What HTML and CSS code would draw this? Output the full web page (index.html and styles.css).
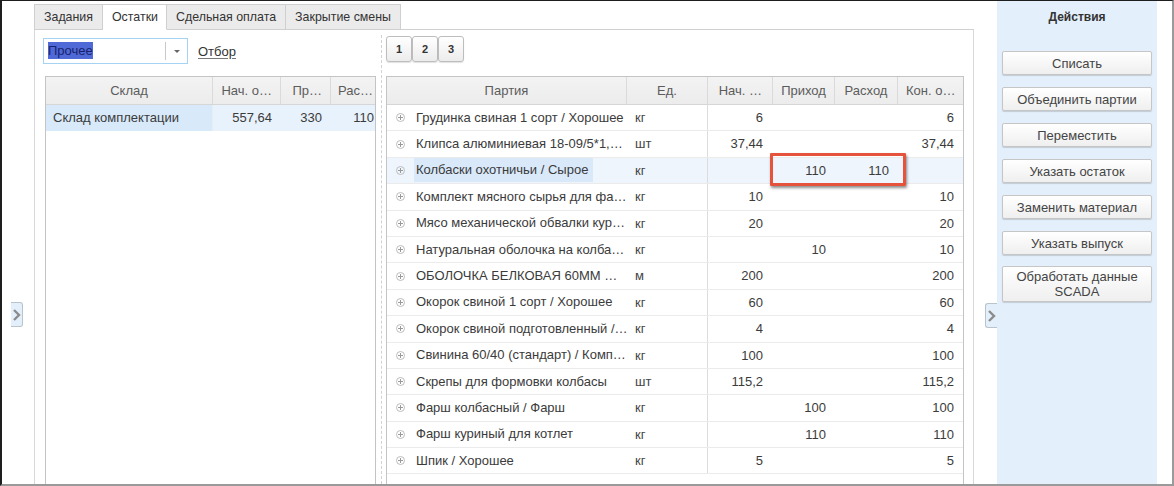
FILE: index.html
```html
<!DOCTYPE html>
<html lang="ru">
<head>
<meta charset="utf-8">
<title>Остатки</title>
<link rel="stylesheet" href="styles.css">
</head>
<body>
<div class="frame">
  <div class="gutter-left">
    <div class="side-arrow arrow-left">
      <svg width="9" height="14" viewBox="0 0 9 14"><polyline points="2,2 7,7 2,12" fill="none" stroke="#8c8c8c" stroke-width="2.4"/></svg>
    </div>
  </div>

  <div class="main">
    <div class="tabs">
      <div class="tab">Задания</div>
      <div class="tab active">Остатки</div>
      <div class="tab">Сдельная оплата</div>
      <div class="tab">Закрытие смены</div>
    </div>
    <div class="panel">
      <div class="col-left">
        <div class="filter-row">
          <div class="combo">
            <span class="combo-value"><span class="sel">Прочее</span></span>
            <span class="combo-btn"><span class="tri"></span></span>
          </div>
          <a class="link">Отбор</a>
        </div>
        <div class="grid grid-left">
          <div class="ghead">
            <div class="hc c-sklad">Склад</div>
            <div class="hc c-nach">Нач. о…</div>
            <div class="hc c-pr">Пр…</div>
            <div class="hc c-ras last">Рас…</div>
          </div>
          <div class="grow selected">
            <div class="bc c-sklad sel-cell">Склад комплектации</div>
            <div class="bc c-nach num">557,64</div>
            <div class="bc c-pr num">330</div>
            <div class="bc c-ras num tight">110</div>
          </div>
        </div>
      </div>

      <div class="sep"></div>

      <div class="col-right">
        <div class="pager">
          <button class="pbtn">1</button>
          <button class="pbtn">2</button>
          <button class="pbtn">3</button>
        </div>
        <div class="grid grid-right">
          <div class="ghead">
            <div class="hc r-party">Партия</div>
            <div class="hc r-ed">Ед.</div>
            <div class="hc r-n">Нач. …</div>
            <div class="hc r-p">Приход</div>
            <div class="hc r-r">Расход</div>
            <div class="hc r-k last">Кон. о…</div>
          </div>
          <div class="gbody">
            <div class="grow"><div class="bc r-party"><span class="exp"></span><span class="pt">Грудинка свиная 1 сорт / Хорошее</span></div><div class="bc r-ed">кг</div><div class="bc r-n num">6</div><div class="bc r-p num"></div><div class="bc r-r num"></div><div class="bc r-k num">6</div></div>
            <div class="grow"><div class="bc r-party"><span class="exp"></span><span class="pt">Клипса алюминиевая 18-09/5*1,…</span></div><div class="bc r-ed">шт</div><div class="bc r-n num">37,44</div><div class="bc r-p num"></div><div class="bc r-r num"></div><div class="bc r-k num">37,44</div></div>
            <div class="grow hl"><div class="bc r-party"><span class="exp"></span><span class="pt pt-sel">Колбаски охотничьи / Сырое</span></div><div class="bc r-ed">кг</div><div class="bc r-n num"></div><div class="bc r-p num">110</div><div class="bc r-r num">110</div><div class="bc r-k num"></div></div>
            <div class="grow"><div class="bc r-party"><span class="exp"></span><span class="pt">Комплект мясного сырья для фа…</span></div><div class="bc r-ed">кг</div><div class="bc r-n num">10</div><div class="bc r-p num"></div><div class="bc r-r num"></div><div class="bc r-k num">10</div></div>
            <div class="grow"><div class="bc r-party"><span class="exp"></span><span class="pt">Мясо механической обвалки кур…</span></div><div class="bc r-ed">кг</div><div class="bc r-n num">20</div><div class="bc r-p num"></div><div class="bc r-r num"></div><div class="bc r-k num">20</div></div>
            <div class="grow"><div class="bc r-party"><span class="exp"></span><span class="pt">Натуральная оболочка на колба…</span></div><div class="bc r-ed">кг</div><div class="bc r-n num"></div><div class="bc r-p num">10</div><div class="bc r-r num"></div><div class="bc r-k num">10</div></div>
            <div class="grow"><div class="bc r-party"><span class="exp"></span><span class="pt">ОБОЛОЧКА БЕЛКОВАЯ 60ММ …</span></div><div class="bc r-ed">м</div><div class="bc r-n num">200</div><div class="bc r-p num"></div><div class="bc r-r num"></div><div class="bc r-k num">200</div></div>
            <div class="grow"><div class="bc r-party"><span class="exp"></span><span class="pt">Окорок свиной 1 сорт / Хорошее</span></div><div class="bc r-ed">кг</div><div class="bc r-n num">60</div><div class="bc r-p num"></div><div class="bc r-r num"></div><div class="bc r-k num">60</div></div>
            <div class="grow"><div class="bc r-party"><span class="exp"></span><span class="pt">Окорок свиной подготовленный /…</span></div><div class="bc r-ed">кг</div><div class="bc r-n num">4</div><div class="bc r-p num"></div><div class="bc r-r num"></div><div class="bc r-k num">4</div></div>
            <div class="grow"><div class="bc r-party"><span class="exp"></span><span class="pt">Свинина 60/40 (стандарт) / Комп…</span></div><div class="bc r-ed">кг</div><div class="bc r-n num">100</div><div class="bc r-p num"></div><div class="bc r-r num"></div><div class="bc r-k num">100</div></div>
            <div class="grow"><div class="bc r-party"><span class="exp"></span><span class="pt">Скрепы для формовки колбасы</span></div><div class="bc r-ed">шт</div><div class="bc r-n num">115,2</div><div class="bc r-p num"></div><div class="bc r-r num"></div><div class="bc r-k num">115,2</div></div>
            <div class="grow"><div class="bc r-party"><span class="exp"></span><span class="pt">Фарш колбасный / Фарш</span></div><div class="bc r-ed">кг</div><div class="bc r-n num"></div><div class="bc r-p num">100</div><div class="bc r-r num"></div><div class="bc r-k num">100</div></div>
            <div class="grow"><div class="bc r-party"><span class="exp"></span><span class="pt">Фарш куриный для котлет</span></div><div class="bc r-ed">кг</div><div class="bc r-n num"></div><div class="bc r-p num">110</div><div class="bc r-r num"></div><div class="bc r-k num">110</div></div>
            <div class="grow"><div class="bc r-party"><span class="exp"></span><span class="pt">Шпик / Хорошее</span></div><div class="bc r-ed">кг</div><div class="bc r-n num">5</div><div class="bc r-p num"></div><div class="bc r-r num"></div><div class="bc r-k num">5</div></div>
          </div>
          <div class="callout"></div>
        </div>
      </div>
    </div>
  </div>

  <div class="gutter-right">
    <div class="side-arrow arrow-right">
      <svg width="9" height="14" viewBox="0 0 9 14"><polyline points="2,2 7,7 2,12" fill="none" stroke="#8c8c8c" stroke-width="2.4"/></svg>
    </div>
  </div>

  <div class="actions">
    <div class="actions-title">Действия</div>
    <div class="actions-list">
      <button class="abtn">Списать</button>
      <button class="abtn">Объединить партии</button>
      <button class="abtn">Переместить</button>
      <button class="abtn">Указать остаток</button>
      <button class="abtn">Заменить материал</button>
      <button class="abtn">Указать выпуск</button>
      <button class="abtn tall">Обработать данные<br>SCADA</button>
    </div>
  </div>
  <div class="edge"></div>
</div>
</body>
</html>
```

FILE: styles.css
```css
* { box-sizing: border-box; }
html, body { margin: 0; padding: 0; background: #fff; }
body {
  font-family: "Liberation Sans", Arial, sans-serif;
  font-size: 13px;
  color: #3b3b3b;
}

.frame {
  width: 1174px;
  height: 486px;
  display: flex;
  border-top: 1px solid #1e1e1e;
  border-left: 2px solid #1e1e1e;
  border-right: 2px solid #9a9a9a;
  border-bottom: 2px solid #9a9a9a;
  overflow: hidden;
}

/* side gutters */
.gutter-left {
  width: 32px;
  flex: none;
  padding-top: 301px;
  padding-left: 9px;
}
.gutter-right {
  width: 23px;
  flex: none;
  display: flex;
  justify-content: flex-end;
  padding-top: 302px;
}
.side-arrow {
  width: 12px;
  height: 25px;
  background: #e3effb;
  display: flex;
  align-items: center;
  justify-content: center;
}
.arrow-left {
  border: 1px solid #b9c3cc;
  border-left: none;
  border-radius: 0 3px 3px 0;
}
.arrow-right {
  border: 1px solid #b9c3cc;
  border-right: none;
  border-radius: 3px 0 0 3px;
}

/* main area */
.main {
  width: 940px;
  flex: none;
  display: flex;
  flex-direction: column;
  padding-top: 3px;
}
.tabs {
  display: flex;
  height: 26px;
  position: relative;
  z-index: 1;
}
.tab {
  height: 26px;
  padding: 0 9px 0 9px;
  line-height: 24px;
  font-size: 12.4px;
  color: #333;
  background: #ebebeb;
  border: 1px solid #cfcfcf;
  border-left: none;
}
.tab:first-child { border-left: 1px solid #cfcfcf; }
.tab.active {
  background: #fff;
  border-bottom-color: #fff;
  padding: 0 8px 0 9px;
}
.panel {
  flex: 1;
  margin-top: -1px;
  border-top: 1px solid #cfcfcf;
  border-left: 1px solid #d8d8d8;
  border-right: 1px solid #d8d8d8;
  display: flex;
  min-height: 0;
}

.col-left {
  width: 341px;
  flex: none;
  padding: 8px 0 0 8px;
  display: flex;
  flex-direction: column;
}
.filter-row {
  display: flex;
  align-items: center;
  height: 26px;
  margin-bottom: 12px;
}
.combo {
  width: 145px;
  height: 26px;
  border: 1px solid #a6d2f3;
  display: flex;
  align-items: center;
  background: #fff;
}
.combo-value {
  flex: 1;
  padding-left: 4px;
  line-height: 18px;
}
.sel {
  background: #4f6ad6;
  color: #17236f;
  padding: 1px 0;
}
.combo-btn {
  width: 22px;
  height: 18px;
  border-left: 1px solid #c9c9c9;
  display: flex;
  align-items: center;
  justify-content: center;
}
.tri {
  width: 0; height: 0;
  border-left: 3px solid transparent;
  border-right: 3px solid transparent;
  border-top: 3px solid #666;
}
.link {
  margin-left: 10px;
  color: #333;
  text-decoration: underline;
  text-decoration-color: #777;
  text-underline-offset: 2px;
}

/* grids */
.grid {
  border: 1px solid #c4c4c4;
  border-bottom: none;
  flex: 1;
  display: flex;
  flex-direction: column;
  position: relative;
  background: #fff;
}
.grid-left { margin-left: 2px; width: 331px; }
.ghead {
  display: flex;
  height: 28px;
  background: linear-gradient(#f3f3f3, #ececec);
  border-bottom: 1px solid #d6d6d6;
  flex: none;
}
.hc {
  border-right: 1px solid #dadada;
  color: #5c5c5c;
  text-align: center;
  line-height: 27px;
  white-space: nowrap;
  overflow: hidden;
}
.hc.last { border-right: none; }
.grow {
  display: flex;
  height: 26.4px;
  border-bottom: 1px solid #ebebeb;
  flex: none;
}
.bc {
  line-height: 25px;
  white-space: nowrap;
  overflow: hidden;
  color: #3b3b3b;
}
.num { text-align: right; padding-right: 9px; }

.c-sklad { width: 167px; }
.c-nach { width: 68px; }
.c-pr { width: 50px; }
.c-ras { width: 44px; }
.grid-left .bc.c-sklad { padding-left: 7px; }
.grid-left .hc.c-nach,
.grid-left .hc.c-pr { text-align: right; padding-right: 8px; }
.grid-left .hc.c-ras { text-align: left; padding-left: 7px; }
.grow.selected { background: #e8f2fc; border-bottom: none; }
.sel-cell { background: #d8e9f9; border-right: 1px solid #e6eef6; }
.tight { padding-right: 1px; }

.sep {
  width: 6px;
  flex: none;
  border-right: 1px dashed #d2d2d2;
  margin-right: 4px;
  margin-top: 5px;
}

.col-right {
  width: 578px;
  flex: none;
  padding-top: 6px;
  display: flex;
  flex-direction: column;
}
.pager {
  display: flex;
  height: 26px;
  margin-bottom: 14px;
}
.pbtn {
  width: 26px;
  height: 26px;
  margin: 0;
  padding: 0;
  font-family: "Liberation Sans", Arial, sans-serif;
  font-size: 11px;
  font-weight: bold;
  color: #333;
  background: linear-gradient(#ffffff, #ececec);
  border: 1px solid #bdbdbd;
  border-radius: 3px;
  box-shadow: 0 1px 1px rgba(0,0,0,0.12);
}
.grid-right { width: 578px; }

.r-party { width: 240px; }
.r-ed { width: 81px; }
.r-n { width: 65px; }
.r-p { width: 62px; }
.r-r { width: 63px; }
.r-k { width: 65px; }
.grid-right .hc.r-n { text-align: right; padding-right: 10px; }
.grid-right .hc.r-k { text-align: left; padding-left: 8px; }
.grid-right .bc.r-ed { border-right: 1px solid #dcdcdc; padding-left: 8px; color: #444; }
.grid-right .bc.r-n { padding-right: 10px; }
.gbody { display: flex; flex-direction: column; }
.grid-right .bc.r-party {
  display: flex;
  align-items: center;
  padding-left: 9px;
}
.exp {
  width: 9px;
  height: 9px;
  border: 1px solid #bdbdbd;
  border-radius: 50%;
  position: relative;
  margin-right: 11px;
  flex: none;
}
.exp::before, .exp::after {
  content: "";
  position: absolute;
  background: #9a9a9a;
}
.exp::before { left: 1px; right: 1px; top: 3px; height: 1px; }
.exp::after { top: 1px; bottom: 1px; left: 3px; width: 1px; }
.pt { line-height: 24px; }
.pt-sel { background: #d9e9fa; padding: 0 5px 0 2px; margin-left: -2px; }
.grow.hl { background: #eef5fd; }

.callout {
  position: absolute;
  left: 383px;
  top: 76px;
  width: 136px;
  height: 33px;
  border: 3px solid #e5533d;
  box-shadow: 1px 2px 3px rgba(0,0,0,0.45);
  border-radius: 1px;
}

/* actions */
.actions {
  width: 160px;
  flex: none;
  background: #e3effb;
  padding: 0 5px;
}
.actions-title {
  height: 42px;
  padding-top: 9px;
  text-align: center;
  font-weight: bold;
  font-size: 12px;
  color: #333;
}
.actions-list {
  display: flex;
  flex-direction: column;
  gap: 12px;
  padding-top: 8px;
}
.abtn {
  height: 24px;
  width: 150px;
  margin: 0;
  padding: 0;
  font-family: "Liberation Sans", Arial, sans-serif;
  font-size: 13px;
  color: #444;
  background: linear-gradient(#ffffff, #efefef);
  border: 1px solid #c6c6c6;
  border-radius: 2px;
  box-shadow: 0 1px 1px rgba(0,0,0,0.15);
}
.abtn.tall { height: 36px; line-height: 15px; margin-top: -1px; }
.edge { flex: 1; }
```
